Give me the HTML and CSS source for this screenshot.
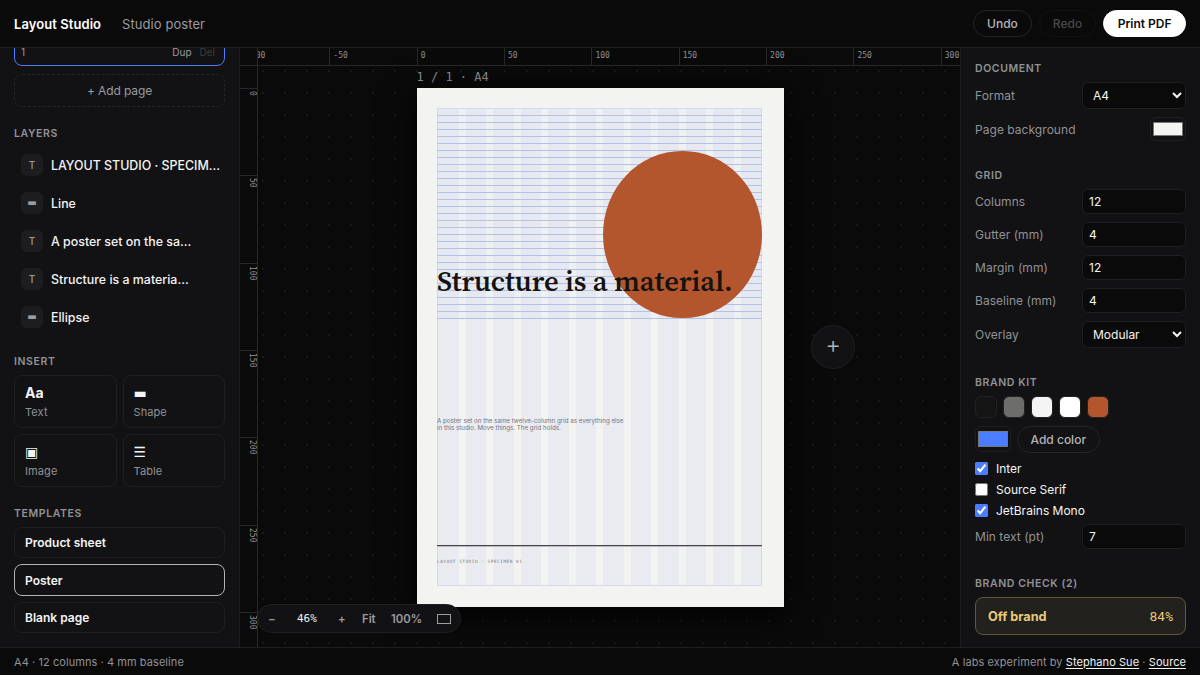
FILE: index.html
```html
<!DOCTYPE html>
<html lang="en">
<head>
    <meta charset="UTF-8">
    <meta name="viewport" content="width=device-width, initial-scale=1.0">
    <title>Layout Studio</title>
    <link rel="stylesheet" href="styles.css">
</head>
<body>

    <header class="topbar">
        <strong class="brand">Layout Studio</strong>
        <span class="doc-name">Studio poster</span>
        <div class="actions">
            <button class="pill">Undo</button>
            <button class="pill" disabled>Redo</button>
            <button class="pill primary">Print PDF</button>
        </div>
    </header>

    <main class="workspace">
        <aside class="panel left">
            <div class="page-card">
                <span class="page-number">1</span>
                <span>Dup</span>
                <span class="off">Del</span>
            </div>
            <button class="add-page">+ Add page</button>

            <h2>Layers</h2>
            <ul class="layers">
                <li><span class="kind">T</span>LAYOUT STUDIO · SPECIM…</li>
                <li><span class="kind bar">▬</span>Line</li>
                <li><span class="kind">T</span>A poster set on the sa…</li>
                <li><span class="kind">T</span>Structure is a materia…</li>
                <li><span class="kind bar">▬</span>Ellipse</li>
            </ul>

            <h2>Insert</h2>
            <div class="insert">
                <button><b>Aa</b><span>Text</span></button>
                <button><b class="glyph">▬</b><span>Shape</span></button>
                <button><b class="glyph">▣</b><span>Image</span></button>
                <button><b class="glyph">☰</b><span>Table</span></button>
            </div>

            <h2>Templates</h2>
            <div class="templates">
                <button>Product sheet</button>
                <button class="active">Poster</button>
                <button>Blank page</button>
            </div>
        </aside>

        <section class="stage">
            <div class="ruler-x">
                <span>-100</span><span>-50</span><span>0</span><span>50</span><span>100</span><span>150</span><span>200</span><span>250</span><span>300</span>
            </div>
            <div class="ruler-y">
                <span>0</span><span>50</span><span>100</span><span>150</span><span>200</span><span>250</span><span>300</span>
            </div>

            <div class="page-label">1 / 1 · A4</div>
            <div class="page">
                <div class="columns">
                    <i></i><i></i><i></i><i></i><i></i><i></i><i></i><i></i><i></i><i></i><i></i><i></i>
                </div>
                <div class="baselines"></div>
                <div class="ellipse"></div>
                <div class="title">Structure is a material.</div>
                <div class="copy">A poster set on the same twelve-column grid as everything else<br>in this studio. Move things. The grid holds.</div>
                <div class="rule"></div>
                <div class="specimen">LAYOUT STUDIO · SPECIMEN 01</div>
            </div>
            <button class="next-page">+</button>

            <div class="zoombar">
                <span class="minus">−</span>
                <span class="percent">46%</span>
                <span class="plus">+</span>
                <span class="fit">Fit</span>
                <span class="full">100%</span>
                <span class="frame"></span>
            </div>
        </section>

        <aside class="panel right">
            <h2>Document</h2>
            <label class="row tall">Format
                <select><option>A4</option></select>
            </label>
            <label class="row color">Page background
                <input type="color" value="#f4f4f1">
            </label>

            <h2>Grid</h2>
            <label class="row">Columns <input type="number" value="12"></label>
            <label class="row">Gutter (mm) <input type="number" value="4"></label>
            <label class="row">Margin (mm) <input type="number" value="12"></label>
            <label class="row">Baseline (mm) <input type="number" value="4"></label>
            <label class="row tall last">Overlay
                <select><option>Modular</option></select>
            </label>

            <h2>Brand kit</h2>
            <div class="swatches">
                <i class="ink"></i><i class="grey"></i><i class="paper"></i><i class="white"></i><i class="rust"></i>
            </div>
            <div class="new-color">
                <input type="color" value="#4a7dff">
                <button class="pill">Add color</button>
            </div>
            <label class="check"><input type="checkbox" checked>Inter</label>
            <label class="check"><input type="checkbox">Source Serif</label>
            <label class="check"><input type="checkbox" checked>JetBrains Mono</label>
            <label class="row min-text">Min text (pt) <input type="number" value="7"></label>

            <h2>Brand check (2)</h2>
            <div class="score"><b>Off brand</b><span>84%</span></div>
        </aside>
    </main>

    <footer class="statusbar">
        <span>A4 · 12 columns · 4 mm baseline</span>
        <span>A labs experiment by <a href="#">Stephano Sue</a> · <a href="#">Source</a></span>
    </footer>

</body>
</html>
```
FILE: styles.css
```css
* {
    box-sizing: border-box;
}

body {
    margin: 0;
    height: 100vh;
    display: flex;
    flex-direction: column;
    overflow: hidden;
    background: #0a0a0a;
    color: #f4f4f2;
    font-family: Inter, "Liberation Sans", sans-serif;
    font-size: 13px;
}

button, input, select {
    font-family: inherit;
    color: inherit;
    margin: 0;
}

/* top bar */
.topbar {
    height: 48px;
    flex: none;
    display: flex;
    align-items: center;
    padding: 0 14px;
    border-bottom: 1px solid #1e1e20;
}

.brand {
    font-size: 13px;
    font-weight: 600;
    letter-spacing: 0.07px;
    color: #fff;
}

.doc-name {
    margin-left: 21px;
    letter-spacing: 0.07px;
    color: #9b9ba0;
}

.actions {
    margin-left: auto;
    display: flex;
    gap: 7px;
}

.pill {
    height: 27px;
    padding: 0 13px;
    border: 1px solid #242427;
    border-radius: 14px;
    background: transparent;
    font-size: 12px;
    font-weight: 500;
    color: #b4b4b8;
}

.pill:disabled {
    color: #47474a;
    border-color: #131315;
}

.pill.primary {
    padding: 0 13.5px;
    background: #fff;
    border-color: #fff;
    color: #0a0a0a;
    font-weight: 600;
}

/* side panels */
.workspace {
    flex: 1;
    min-height: 0;
    display: grid;
    grid-template-columns: 240px 1fr 240px;
}

.panel {
    background: #121214;
    padding: 0 14px;
    overflow: hidden;
}

.left {
    border-right: 1px solid #1e1e20;
}

.right {
    border-left: 1px solid #1e1e20;
}

h2 {
    height: 14px;
    margin: 20px 0 6px;
    font-size: 10.5px;
    line-height: 14px;
    font-weight: 600;
    letter-spacing: 0.6px;
    text-transform: uppercase;
    color: #919196;
}

.right h2 {
    margin-top: 28px;
}

.right h2:first-child {
    margin-top: 14px;
}

.page-card {
    height: 90px;
    margin-top: -72px;
    padding: 0 9px 6px 6px;
    border: 1px solid #4a7dff;
    border-radius: 8px;
    display: flex;
    align-items: flex-end;
    gap: 8px;
    font-size: 10px;
    line-height: 14px;
    color: #9b9ba0;
}

.page-number {
    margin-right: auto;
}

.page-card .off {
    color: #3b3b3e;
}

.add-page {
    display: block;
    width: 100%;
    height: 33px;
    margin-top: 8px;
    border: 1px dashed #262629;
    border-radius: 8px;
    background: none;
    color: #9b9ba0;
    font-size: 12px;
    letter-spacing: -0.1px;
}

.layers {
    list-style: none;
    margin: -1px 0;
    padding: 0;
}

.layers li {
    height: 38px;
    padding-left: 7px;
    display: flex;
    align-items: center;
    gap: 8px;
    font-size: 12.4px;
    font-weight: 500;
    white-space: nowrap;
}

.kind {
    width: 22px;
    height: 22px;
    border-radius: 6px;
    background: #1d1d1f;
    color: #9b9ba0;
    font-size: 10px;
    line-height: 22px;
    text-align: center;
}

.kind.bar {
    font-family: "DejaVu Sans", sans-serif;
    font-size: 10px;
    font-weight: 400;
}

.insert {
    display: grid;
    grid-template-columns: 1fr 1fr;
    gap: 6px;
}

.insert button {
    height: 53px;
    padding: 0 10px;
    border: 1px solid #1f1f22;
    border-radius: 8px;
    background: none;
    text-align: left;
}

.insert b {
    display: block;
    font-size: 14px;
    line-height: 18px;
    font-weight: 700;
}

.insert .glyph {
    font-family: "DejaVu Sans", sans-serif;
    font-weight: 400;
}

.insert span {
    display: block;
    margin-top: 2px;
    font-size: 11px;
    line-height: 16px;
    letter-spacing: 0.1px;
    color: #919196;
}

.templates {
    display: grid;
    gap: 6px;
}

.templates button {
    height: 31.4px;
    padding: 0 10px;
    border: 1px solid #1f1f22;
    border-radius: 8px;
    background: none;
    text-align: left;
    font-size: 12px;
    font-weight: 600;
}

.templates .active {
    border-color: #b4b4b8;
}

/* canvas */
.stage {
    position: relative;
    overflow: hidden;
    background: #0a0a0a radial-gradient(circle at 1px 1px, #19191b 1px, transparent 1px) 0 0 / 22px 22px;
}

.ruler-x, .ruler-y {
    position: absolute;
    display: flex;
    overflow: hidden;
    background: #0a0a0a;
    font-family: "DejaVu Sans Mono", monospace;
    font-size: 8px;
    line-height: 9px;
    color: #919196;
}

.ruler-x {
    left: 0;
    right: 0;
    top: 0;
    height: 18px;
    padding-left: 2px;
    border-bottom: 1px solid #28282b;
}

.ruler-y {
    left: 0;
    top: 0;
    bottom: 0;
    width: 18px;
    padding-top: 40px;
    flex-direction: column;
    border-right: 1px solid #28282b;
    background: linear-gradient(#28282b, #28282b) 0 17px / 18px 1px no-repeat #0a0a0a;
}

.ruler-x span {
    flex: 0 0 87.35px;
    padding: 3px 0 0 3px;
    border-left: 1px solid #28282b;
}

.ruler-y span {
    flex: 0 0 87.35px;
    padding: 2px 0 0;
    border-top: 1px solid #28282b;
    writing-mode: vertical-rl;
}

.page-label {
    position: absolute;
    left: 176.5px;
    top: 22px;
    font-family: "DejaVu Sans Mono", monospace;
    font-size: 12px;
    line-height: 14px;
    color: #919196;
}

.page {
    position: absolute;
    left: 176.6px;
    top: 40px;
    width: 367px;
    height: 519px;
    background: #f3f3f1;
    box-shadow: 0 8px 30px #000;
}

.columns {
    position: absolute;
    left: 20.4px;
    top: 20px;
    width: 325.4px;
    height: 478px;
    display: flex;
    gap: 7px;
    border: 1px solid #d6d8f2;
}

.columns i {
    flex: 1;
    background: #eaebf1;
}

.baselines {
    position: absolute;
    left: 20.4px;
    top: 21px;
    width: 325.4px;
    height: 210px;
    background: linear-gradient(rgba(74, 125, 255, 0.02) 6px, #b3c0e8 6px) 0 0 / 100% 7px;
}

.ellipse {
    position: absolute;
    left: 186.8px;
    top: 62.7px;
    width: 158.8px;
    height: 167.8px;
    border-radius: 50%;
    background: #b4562d;
}

.title {
    position: absolute;
    left: 20.4px;
    top: 173px;
    font-family: "Source Serif 4", "Source Serif Pro", "Noto Serif CJK SC", "Liberation Serif", serif;
    font-size: 28.55px;
    line-height: 40px;
    font-weight: 600;
    white-space: nowrap;
    color: #15130f;
}

.copy {
    position: absolute;
    left: 20.4px;
    top: 329px;
    font-size: 6.2px;
    line-height: 7px;
    white-space: nowrap;
    color: #74747a;
}

.rule {
    position: absolute;
    left: 20.4px;
    top: 457px;
    width: 325px;
    height: 2px;
    background: #45454b;
    border-bottom: 1px solid #b9b9c0;
}

.specimen {
    position: absolute;
    left: 20.4px;
    top: 470px;
    font-family: "DejaVu Sans Mono", monospace;
    font-size: 4.4px;
    line-height: 7px;
    letter-spacing: 0.52px;
    white-space: nowrap;
    color: #7d7d82;
}

.next-page {
    position: absolute;
    left: 571px;
    top: 277px;
    width: 44px;
    height: 44px;
    padding: 0 0 4px;
    border: 1px solid #1f1f22;
    border-radius: 50%;
    background: #121214;
    color: #b4b4b8;
    font-size: 24px;
    line-height: 36px;
    font-weight: 300;
}

.zoombar {
    position: absolute;
    left: 17px;
    top: 556px;
    width: 204px;
    height: 29px;
    border: 1px solid #1f1f22;
    border-radius: 15px;
    background: #121214;
    display: flex;
    align-items: center;
    padding-left: 10px;
    font-size: 11.3px;
    font-weight: 600;
    color: #9b9ba0;
}

.minus {
    width: 29px;
}

.percent {
    width: 41px;
    font-family: "DejaVu Sans Mono", monospace;
    font-size: 11px;
    font-weight: 400;
    color: #f4f4f2;
}

.plus {
    width: 24px;
}

.fit {
    width: 29px;
}

.full {
    width: 46px;
}

.frame {
    width: 14px;
    height: 10px;
    border: 1px solid #9b9ba0;
}

/* inspector */
.row {
    height: 25px;
    margin-bottom: 8px;
    display: flex;
    align-items: center;
    justify-content: space-between;
    font-size: 12px;
    letter-spacing: 0.04px;
    color: #919196;
}

.row.tall {
    height: 27px;
}

.row.color {
    height: 24px;
    margin-bottom: 0;
}

.row.last, .row.min-text {
    margin-bottom: 0;
}

.row select, .row input[type="number"] {
    width: 104px;
    height: 100%;
    padding: 0 6px;
    border: 1px solid #1f1f22;
    border-radius: 6px;
    background: #0a0a0a;
    color: #f4f4f2;
    font-size: 12px;
}

.row select {
    padding: 0 0 0 6px;
}

input[type="color"] {
    width: 36px;
    height: 24px;
    padding: 0;
    border: 1px solid #1f1f22;
    border-radius: 6px;
    background: none;
}

.swatches {
    display: flex;
    gap: 6px;
}

.swatches i {
    width: 22px;
    height: 22px;
    border: 1px solid #222224;
    border-radius: 6px;
}

.ink { background: #141414; }
.grey { background: #6d6d6b; }
.paper { background: #f4f4f4; }
.white { background: #fff; }
.rust { background: #b4562d; }

.new-color {
    display: flex;
    gap: 6px;
    margin: 8px 0 5px;
    height: 27px;
}

.new-color input[type="color"] {
    height: 26px;
}

.new-color .pill {
    padding: 0 12.5px;
}

.check {
    height: 21px;
    display: flex;
    align-items: center;
    gap: 8px;
    font-size: 12px;
}

.check input {
    width: 13px;
    height: 13px;
    accent-color: #4a7dff;
}

.min-text {
    margin-top: 3px;
}

.score {
    height: 38px;
    padding: 0 12px;
    display: flex;
    align-items: center;
    justify-content: space-between;
    border: 1px solid #5e5a3c;
    border-radius: 8px;
    background: #22211d;
    color: #e8c97a;
}

.score b {
    font-size: 12.7px;
    font-weight: 700;
}

.score span {
    font-family: "DejaVu Sans Mono", monospace;
}

/* status bar */
.statusbar {
    flex: none;
    height: 28px;
    padding: 0 14px;
    border-top: 1px solid #1e1e20;
    display: flex;
    align-items: center;
    justify-content: space-between;
    font-size: 11px;
    letter-spacing: 0.07px;
    color: #919196;
}

.statusbar a {
    color: #f4f4f2;
    text-underline-offset: 2px;
}
```
